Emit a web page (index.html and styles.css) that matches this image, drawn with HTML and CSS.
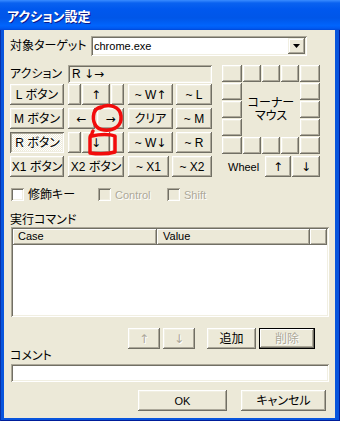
FILE: index.html
```html
<!DOCTYPE html>
<html lang="ja">
<head>
<meta charset="utf-8">
<title>アクション設定</title>
<link rel="stylesheet" href="styles.css">
</head>
<body>
<div class="window">
  <div class="titlebar"><span class="title">アクション設定</span></div>
  <div class="client">
    <div class="row-target">
      <span class="label target-label">対象ターゲット</span>
      <div class="combo">
        <span class="combo-text lat">chrome.exe</span>
        <span class="combo-btn"><svg width="7" height="4" viewBox="0 0 7 4"><polygon points="0,0 7,0 3.5,4" fill="#000"/></svg></span>
      </div>
    </div>

    <div class="main">
      <div class="left">
        <div class="row-action">
          <span class="label action-label">アクション</span>
          <div class="field readonly">R&nbsp;<span class="arr">↓→</span></div>
        </div>
        <div class="pad">
          <div class="pad-row">
            <div class="btn col1">L ボタン</div>
            <div class="dpad">
              <div class="btn sm"></div><div class="btn mid"><span class="arr">↑</span></div><div class="btn sm"></div>
            </div>
            <div class="btn col3">~ W<span class="arr">↑</span></div>
            <div class="btn col4">~ L</div>
          </div>
          <div class="pad-row">
            <div class="btn col1">M ボタン</div>
            <div class="dpad dpad-lr">
              <div class="btn half"><span class="arr">←</span></div><div class="btn half"><span class="arr">→</span></div>
            </div>
            <div class="btn col3">クリア</div>
            <div class="btn col4">~ M</div>
          </div>
          <div class="pad-row">
            <div class="btn col1 pressed">R ボタン</div>
            <div class="dpad">
              <div class="btn sm"></div><div class="btn mid"><span class="arr">↓</span></div><div class="btn sm"></div>
            </div>
            <div class="btn col3">~ W<span class="arr">↓</span></div>
            <div class="btn col4">~ R</div>
          </div>
          <div class="pad-row">
            <div class="btn col1">X1 ボタン</div>
            <div class="btn x2">X2 ボタン</div>
            <div class="btn tx1">~ X1</div>
            <div class="btn tx2">~ X2</div>
          </div>
        </div>
      </div>

      <div class="right">
        <div class="corner">
          <div class="btn c"></div><div class="btn c"></div><div class="btn c"></div><div class="btn c"></div><div class="btn c"></div>
          <div class="btn c"></div>
          <div class="corner-center">コーナー<br>マウス</div>
          <div class="btn c"></div>
          <div class="btn c"></div><div class="btn c"></div>
          <div class="btn c"></div><div class="btn c"></div>
          <div class="btn c"></div><div class="btn c"></div><div class="btn c"></div><div class="btn c"></div><div class="btn c"></div>
        </div>
        <div class="wheel-row">
          <span class="wheel-label lat">Wheel</span>
          <div class="btn wheel-up"><span class="arr">↑</span></div>
          <div class="btn wheel-down"><span class="arr">↓</span></div>
        </div>
      </div>
    </div>

    <div class="mods">
      <div class="chk-item item1"><span class="chk"></span><span class="chk-text">修飾キー</span></div>
      <div class="chk-item item2"><span class="chk disabled"></span><span class="chk-text lat dis-text">Control</span></div>
      <div class="chk-item item3"><span class="chk disabled"></span><span class="chk-text lat dis-text">Shift</span></div>
    </div>

    <div class="section-label">実行コマンド</div>
    <div class="list">
      <div class="list-head">
        <div class="hcell h1 lat">Case</div>
        <div class="hcell h2 lat">Value</div>
        <div class="hcell h3"></div>
      </div>
    </div>

    <div class="list-buttons">
      <div class="btn lb-up dis-text"><span class="arr">↑</span></div>
      <div class="btn lb-down dis-text"><span class="arr">↓</span></div>
      <div class="btn lb-add">追加</div>
      <div class="btn lb-del default dis-text">削除</div>
    </div>

    <div class="comment-label">コメント</div>
    <div class="field comment-field"></div>

    <div class="dialog-buttons">
      <div class="btn ok lat">OK</div>
      <div class="btn cancel">キャンセル</div>
    </div>
  </div>

  <svg class="marks" width="340" height="421" viewBox="0 0 340 421">
    <path d="M100 108 C108 103 120 106 121 116 C122 126 114 131 104 130 C95 129 92 121 94 113 C95 110 97 108 101 107" fill="none" stroke="#F20C0C" stroke-width="3.5" stroke-linecap="round" stroke-linejoin="round"/>
    <path d="M93 131 C92 133 91 134 92 136 C100 134 110 134 115 136 L115 152 C108 154 97 154 90 153 L90 138 C90 136 91 135 92 135" fill="none" stroke="#F20C0C" stroke-width="3.5" stroke-linecap="round" stroke-linejoin="round"/>
  </svg>
</div>
</body>
</html>
```

FILE: styles.css
```css
* { box-sizing: border-box; margin: 0; padding: 0; }
html, body { width: 340px; height: 421px; overflow: hidden; }
body {
  font-family: "Liberation Sans", "Noto Sans CJK JP", sans-serif;
  font-size: 12px;
  color: #000;
  font-feature-settings: "palt";
  background: #fff;
}
.lat { font-size: 11px; }
.arr {
  font-family: "DejaVu Sans", sans-serif;
  font-size: 12px;
  line-height: 14px;
  color: inherit;
}

.window {
  position: relative;
  width: 340px;
  height: 421px;
  background: #0855DD;
  display: flex;
  flex-direction: column;
  box-shadow: inset 1px 0 0 #0831A8, inset -1px 0 0 #001E9A, inset 0 -1px 0 #001E9A;
}

.titlebar {
  height: 30px;
  flex: none;
  display: flex;
  align-items: center;
  padding-left: 7px;
  background: linear-gradient(to bottom, #3A8CFF 0%, #0A62F0 10%, #0058EE 30%, #0056E8 60%, #0064FC 85%, #005AF2 94%, #0048D8 100%);
}
.title {
  color: #fff;
  font-family: "Noto Sans CJK JP", sans-serif;
  font-size: 13px;
  font-weight: bold;
  line-height: 16px;
  text-shadow: 1px 1px 0 #0A1A8C;
  margin-top: 1px;
}

.client {
  flex: 1;
  margin: 0 5px 3px 4px;
  background: #ECE9D8;
  padding-left: 6px;
  display: flex;
  flex-direction: column;
}

/* generic controls */
.btn {
  display: flex;
  align-items: center;
  justify-content: center;
  height: 21px;
  color: #000;
  background: #ECE9D8;
  box-shadow: inset -1px -1px 0 #716F64, inset 1px 1px 0 #FFFFFF, inset -2px -2px 0 #ACA899, inset 2px 2px 0 #F1EFE2;
  white-space: nowrap;
  line-height: 14px;
  flex: none;
}
.btn.pressed {
  background: repeating-conic-gradient(#FFFFFF 0 25%, #ECE9D8 0 50%) 0 0 / 2px 2px;
  box-shadow: inset 1px 1px 0 #716F64, inset -1px -1px 0 #FFFFFF, inset 2px 2px 0 #ACA899, inset -2px -2px 0 #F1EFE2;
  padding-top: 1px;
  padding-left: 1px;
}
.btn.default {
  box-shadow: inset 0 0 0 1px #000, inset -2px -2px 0 #716F64, inset 2px 2px 0 #FFFFFF, inset -3px -3px 0 #ACA899;
}
.dis-text, .btn.dis-text { color: #ACA899; text-shadow: 1px 1px 0 #FFFFFF; }

.field {
  height: 18px;
  background: #fff;
  box-shadow: inset 1px 1px 0 #ACA899, inset -1px -1px 0 #FFFFFF, inset 2px 2px 0 #716F64, inset -2px -2px 0 #F1EFE2;
  display: flex;
  align-items: center;
  padding-left: 4px;
  line-height: 14px;
  white-space: nowrap;
}
.field.readonly { background: #ECE9D8; }

.label { line-height: 14px; }

/* target row */
.row-target {
  display: flex;
  align-items: center;
  margin-top: 6px;
  height: 20px;
}
.target-label { width: 81px; }
.combo {
  width: 216px;
  height: 20px;
  background: #fff;
  box-shadow: inset 1px 1px 0 #ACA899, inset -1px -1px 0 #FFFFFF, inset 2px 2px 0 #716F64, inset -2px -2px 0 #F1EFE2;
  display: flex;
  align-items: center;
  padding: 2px;
}
.combo-text { flex: 1; padding-left: 1px; line-height: 14px; }
.combo-btn {
  width: 17px;
  height: 16px;
  background: #ECE9D8;
  box-shadow: inset -1px -1px 0 #716F64, inset 1px 1px 0 #F1EFE2, inset -2px -2px 0 #ACA899, inset 2px 2px 0 #FFFFFF;
  display: flex;
  align-items: center;
  justify-content: center;
}

/* main area */
.main {
  display: flex;
  margin-top: 9px;
}
.left { width: 202px; }
.row-action {
  display: flex;
  align-items: center;
  height: 18px;
}
.action-label { width: 58px; }
.row-action .field { width: 144px; }

.pad {
  margin-top: 1px;
  display: flex;
  flex-direction: column;
  gap: 3px;
}
.pad-row { display: flex; }
.col1 { width: 54px; }
.dpad { width: 56px; margin-left: 4px; display: flex; gap: 1px; }
.dpad-lr { gap: 2px; }
.sm { width: 13px; }
.mid { width: 28px; }
.half { width: 27px; }
.col3 { width: 45px; margin-left: 4px; }
.col4 { width: 36px; margin-left: 3px; }
.x2 { width: 56px; margin-left: 4px; }
.tx1 { width: 41px; margin-left: 4px; }
.tx2 { width: 40px; margin-left: 3px; }

.right { width: 98px; margin-left: 10px; }
.corner {
  display: grid;
  grid-template-columns: 20px 18px 18px 18px 20px;
  grid-template-rows: repeat(5, 17px);
  gap: 1px;
}
.corner .btn { height: 17px; width: auto; }
.corner-center {
  grid-column: 2 / 5;
  grid-row: 2 / 5;
  display: flex;
  align-items: center;
  justify-content: center;
  text-align: center;
  line-height: 13px;
}
.wheel-row {
  display: flex;
  align-items: center;
  margin-top: 2px;
  height: 21px;
}
.wheel-label { margin-left: 6px; }
.wheel-up { width: 26px; margin-left: auto; }
.wheel-down { width: 28px; margin-left: 1px; }

/* modifiers */
.mods {
  display: flex;
  align-items: center;
  margin-top: 11px;
  height: 13px;
}
.chk-item { display: flex; align-items: center; }
.item1 { width: 87px; margin-left: 1px; }
.item2 { width: 69px; }
.chk {
  width: 13px;
  height: 13px;
  flex: none;
  background: #fff;
  box-shadow: inset 1px 1px 0 #ACA899, inset -1px -1px 0 #FFFFFF, inset 2px 2px 0 #716F64, inset -2px -2px 0 #F1EFE2;
}
.chk.disabled { background: #ECE9D8; }
.chk-text { margin-left: 4px; line-height: 14px; }

/* command list */
.section-label {
  margin-top: 12px;
  line-height: 14px;
  height: 14px;
}
.list {
  margin-left: 1px;
  width: 318px;
  height: 90px;
  background: #fff;
  padding: 2px;
  box-shadow: inset 1px 1px 0 #ACA899, inset -1px -1px 0 #FFFFFF, inset 2px 2px 0 #716F64, inset -2px -2px 0 #F1EFE2;
}
.list-head { display: flex; height: 16px; }
.hcell {
  height: 16px;
  background: #ECE9D8;
  box-shadow: inset -1px -1px 0 #716F64, inset 1px 1px 0 #FFFFFF, inset -2px -2px 0 #ACA899;
  line-height: 15px;
  padding-left: 5px;
}
.h1 { width: 144px; }
.h2 { width: 153px; padding-left: 6px; }
.h3 { flex: 1; }

.list-buttons {
  display: flex;
  margin-top: 11px;
}
.lb-up { width: 32px; margin-left: 118px; }
.lb-down { width: 32px; margin-left: 3px; }
.lb-add { width: 49px; margin-left: 12px; }
.lb-del { width: 56px; margin-left: 3px; }

.comment-label { line-height: 14px; height: 14px; }
.comment-field { margin-top: 1px; margin-left: 1px; width: 318px; height: 18px; }

.dialog-buttons {
  display: flex;
  margin-top: 8px;
}
.ok { width: 89px; margin-left: 128px; }
.cancel { width: 85px; margin-left: 14px; }

.marks {
  position: absolute;
  left: 0;
  top: 0;
  pointer-events: none;
}
```
